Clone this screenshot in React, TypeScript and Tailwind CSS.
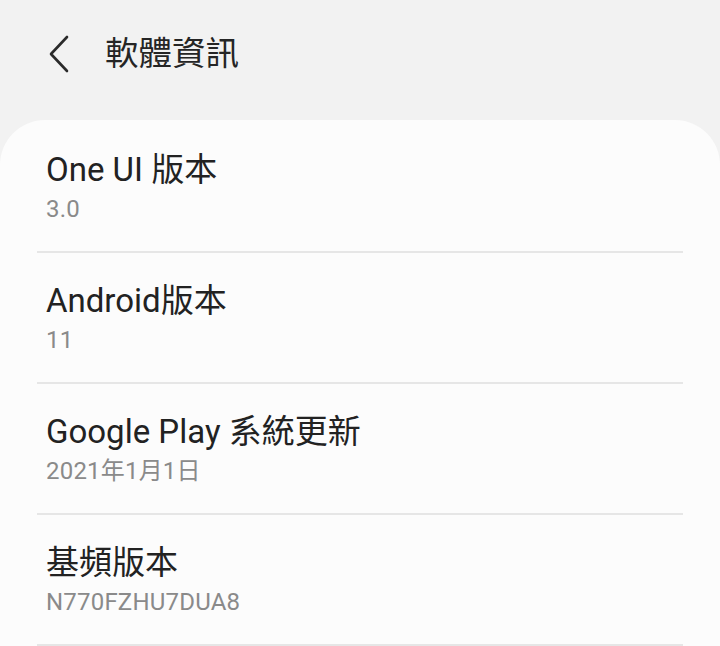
const rows = [
  { title: 'One UI 版本', value: '3.0' },
  { title: 'Android版本', value: '11' },
  { title: 'Google Play 系統更新', value: '2021年1月1日' },
  { title: '基頻版本', value: 'N770FZHU7DUA8' },
];

const font = { fontFamily: 'Roboto, "Noto Sans CJK TC", sans-serif' };

export default function App() {
  return (
    <div className="w-[720px] h-[646px] overflow-hidden bg-[#f2f2f2]" style={font}>
      <header className="h-[108px] flex items-center">
        <button className="ml-[47px] w-[24px] h-[40px] flex items-center justify-center">
          <svg width="22" height="38" viewBox="0 0 22 38" fill="none">
            <path d="M19 2 L3 19 L19 36" stroke="#2a2a2a" strokeWidth="2.6" strokeLinecap="round" strokeLinejoin="round" />
          </svg>
        </button>
        <h1 className="ml-[34px] text-[33.5px] leading-[40px] text-[#252525]">軟體資訊</h1>
      </header>

      <div className="mt-[12px] bg-[#fcfcfc] rounded-t-[45px] pt-[2px] px-[37px] h-[600px]">
        {rows.map((r) => (
          <div key={r.title} className="h-[131px] border-b-2 border-[#e6e6e6] pl-[9px] pt-[29px]">
            <div className="text-[33px] leading-[38px] text-[#222222]">{r.title}</div>
            <div className="mt-[5px] text-[24px] leading-[30px] text-[#8a8a8a] tracking-[0.2px]">{r.value}</div>
          </div>
        ))}
      </div>
    </div>
  );
}
